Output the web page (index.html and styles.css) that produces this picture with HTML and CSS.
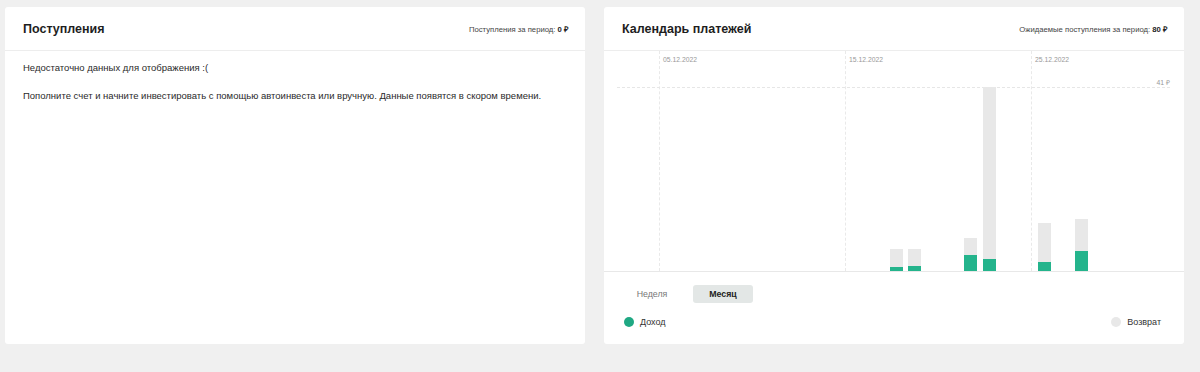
FILE: index.html
```html
<!DOCTYPE html>
<html lang="ru">
<head>
    <meta charset="UTF-8">
    <meta name="viewport" content="width=device-width, initial-scale=1.0">
    <title>Поступления</title>
    <link rel="stylesheet" href="styles.css">
</head>
<body>

<main class="dashboard">
    <!-- Поступления -->
    <section class="card">
        <div class="card-header">
            <h2>Поступления</h2>
            <div class="summary">Поступления за период: <b>0 ₽</b></div>
        </div>
        <div class="card-body">
            <p>Недостаточно данных для отображения :(</p>
            <p>Пополните счет и начните инвестировать с помощью автоинвеста или вручную. Данные появятся в скором времени.</p>
        </div>
    </section>

    <!-- Календарь платежей -->
    <section class="card">
        <div class="card-header">
            <h2>Календарь платежей</h2>
            <div class="summary">Ожидаемые поступления за период: <b>80 ₽</b></div>
        </div>

        <div class="chart">
            <div class="grid-v" style="left: 55px;"><span>05.12.2022</span></div>
            <div class="grid-v" style="left: 241px;"><span>15.12.2022</span></div>
            <div class="grid-v" style="left: 427px;"><span>25.12.2022</span></div>
            <div class="grid-h"><span>41 ₽</span></div>

            <div class="bar" style="left: 286px; height: 22px;"><div class="income" style="height: 4px;"></div></div>
            <div class="bar" style="left: 304px; height: 22px;"><div class="income" style="height: 5px;"></div></div>
            <div class="bar" style="left: 360px; height: 33px;"><div class="income" style="height: 16px;"></div></div>
            <div class="bar" style="left: 379px; height: 184px;"><div class="income" style="height: 12px;"></div></div>
            <div class="bar" style="left: 434px; height: 48px;"><div class="income" style="height: 9px;"></div></div>
            <div class="bar" style="left: 471px; height: 52px;"><div class="income" style="height: 20px;"></div></div>
        </div>

        <div class="period-switch">
            <button class="switch-btn">Неделя</button>
            <button class="switch-btn active">Месяц</button>
        </div>

        <div class="legend">
            <div class="legend-item"><span class="dot dot-income"></span>Доход</div>
            <div class="legend-item"><span class="dot dot-return"></span>Возврат</div>
        </div>
    </section>
</main>

</body>
</html>
```

FILE: styles.css
```css
body {
    font-family: "Liberation Sans", Arial, sans-serif;
    margin: 0;
    padding: 7px 16px 0 5px;
    background-color: #f0f0f0;
    color: #333;
}

.dashboard {
    display: grid;
    grid-template-columns: 580px 580px;
    gap: 19px;
}

.card {
    background-color: #fff;
    height: 337px;
    border-radius: 3px;
    display: flex;
    flex-direction: column;
}

.card-header {
    height: 43px;
    display: flex;
    align-items: center;
    justify-content: space-between;
    padding: 0 17px 0 18px;
    border-bottom: 1px solid #ededed;
}

.card-header h2 {
    margin: 0;
    font-size: 12.5px;
    font-weight: bold;
    color: #1e1e1e;
    padding-top: 1px;
}

.summary {
    font-size: 7.7px;
    color: #444;
}

.summary b {
    color: #222;
}

.card-body {
    padding: 12px 18px;
    font-size: 9.5px;
    color: #2a2a2a;
}

.card-body p {
    margin: 0 0 18px;
    line-height: 10px;
}

/* график */
.chart {
    position: relative;
    height: 220px;
    border-bottom: 1px solid #e8e8e8;
    font-size: 6.8px;
    color: #999;
}

.grid-v {
    position: absolute;
    top: 0;
    bottom: 0;
    border-left: 1px dashed #e9e9e9;
}

.grid-v span {
    position: absolute;
    top: 5px;
    left: 3px;
    white-space: nowrap;
}

.grid-h {
    position: absolute;
    left: 13px;
    right: 14px;
    top: 36px;
    border-top: 1px dashed #e6e6e6;
}

.grid-h span {
    position: absolute;
    right: 0;
    top: -10px;
}

.bar {
    position: absolute;
    bottom: 0;
    width: 13px;
    background-color: #e8e8e8;
    display: flex;
    flex-direction: column;
    justify-content: flex-end;
}

.income {
    background-color: #24b48c;
}

.period-switch {
    display: flex;
    gap: 11px;
    padding: 13px 0 0 18px;
}

.switch-btn {
    width: 60px;
    height: 18px;
    border: none;
    border-radius: 3px;
    background: none;
    font-family: inherit;
    font-size: 8.8px;
    color: #777;
    padding: 0;
}

.switch-btn.active {
    background-color: #e3e7e6;
    color: #222;
    font-weight: bold;
}

.legend {
    display: flex;
    justify-content: space-between;
    padding: 14px 23px 0 20px;
    font-size: 9px;
}

.legend-item {
    display: flex;
    align-items: center;
    gap: 6px;
}

.dot {
    width: 10px;
    height: 10px;
    border-radius: 50%;
}

.dot-income {
    background-color: #1fa883;
}

.dot-return {
    background-color: #e8e8e8;
}
```
